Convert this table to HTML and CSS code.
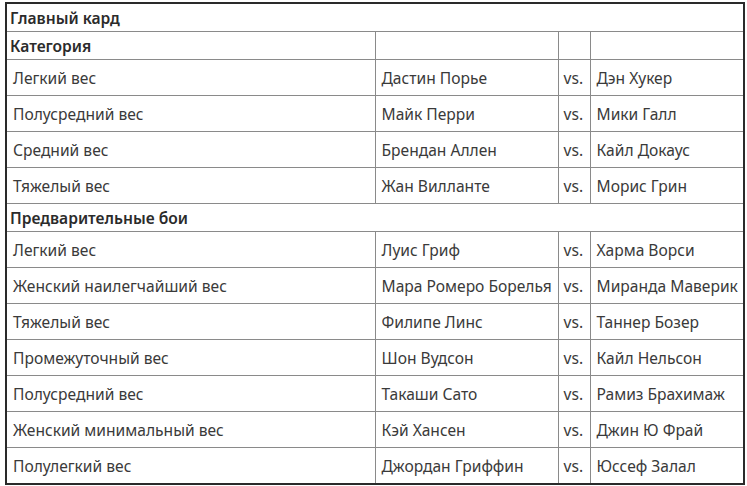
FILE: index.html
```
<!DOCTYPE html>
<html lang="ru">
<head>
<meta charset="utf-8">
<link rel="stylesheet" href="styles.css">
</head>
<body>
<table class="card">
  <colgroup>
    <col class="c-cat">
    <col class="c-f1">
    <col class="c-vs">
    <col class="c-f2">
  </colgroup>
  <tr class="head"><th colspan="4">Главный кард</th></tr>
  <tr class="head"><th>Категория</th><th></th><th></th><th></th></tr>
  <tr><td>Легкий вес</td><td>Дастин Порье</td><td class="vs">vs.</td><td>Дэн Хукер</td></tr>
  <tr><td>Полусредний вес</td><td>Майк Перри</td><td class="vs">vs.</td><td>Мики Галл</td></tr>
  <tr><td>Средний вес</td><td>Брендан Аллен</td><td class="vs">vs.</td><td>Кайл Докаус</td></tr>
  <tr><td>Тяжелый вес</td><td>Жан Вилланте</td><td class="vs">vs.</td><td>Морис Грин</td></tr>
  <tr class="head"><th colspan="4">Предварительные бои</th></tr>
  <tr><td>Легкий вес</td><td>Луис Гриф</td><td class="vs">vs.</td><td>Харма Ворси</td></tr>
  <tr><td>Женский наилегчайший вес</td><td>Мара Ромеро Борелья</td><td class="vs">vs.</td><td>Миранда Маверик</td></tr>
  <tr><td>Тяжелый вес</td><td>Филипе Линс</td><td class="vs">vs.</td><td>Таннер Бозер</td></tr>
  <tr><td>Промежуточный вес</td><td>Шон Вудсон</td><td class="vs">vs.</td><td>Кайл Нельсон</td></tr>
  <tr><td>Полусредний вес</td><td>Такаши Сато</td><td class="vs">vs.</td><td>Рамиз Брахимаж</td></tr>
  <tr><td>Женский минимальный вес</td><td>Кэй Хансен</td><td class="vs">vs.</td><td>Джин Ю Фрай</td></tr>
  <tr><td>Полулегкий вес</td><td>Джордан Гриффин</td><td class="vs">vs.</td><td>Юссеф Залал</td></tr>
</table>
</body>
</html>
```
FILE: styles.css
```
html, body {
  margin: 0;
  padding: 0;
  background: #ffffff;
}
body {
  padding: 2px 0 0 5px;
  font-family: "Noto Sans", "Open Sans", sans-serif;
  font-size: 15.6px;
  color: #3a3a3a;
}
.card {
  border-collapse: collapse;
  table-layout: fixed;
  width: 740px;
  border: 2px solid #2a2a2a;
}
.c-cat { width: 369px; }
.c-f1 { width: 183px; }
.c-vs { width: 32px; }
.c-f2 { width: auto; }
.card th, .card td {
  border: 1px solid #8a8a8a;
  text-align: left;
  white-space: nowrap;
  overflow: hidden;
}
.card th {
  height: 27px;
  padding: 0 3px;
  font-weight: 600;
  color: #2b2b2b;
}
.card td {
  height: 35px;
  padding: 0 6px;
}
.card td.vs {
  padding: 0 5px;
}
```
